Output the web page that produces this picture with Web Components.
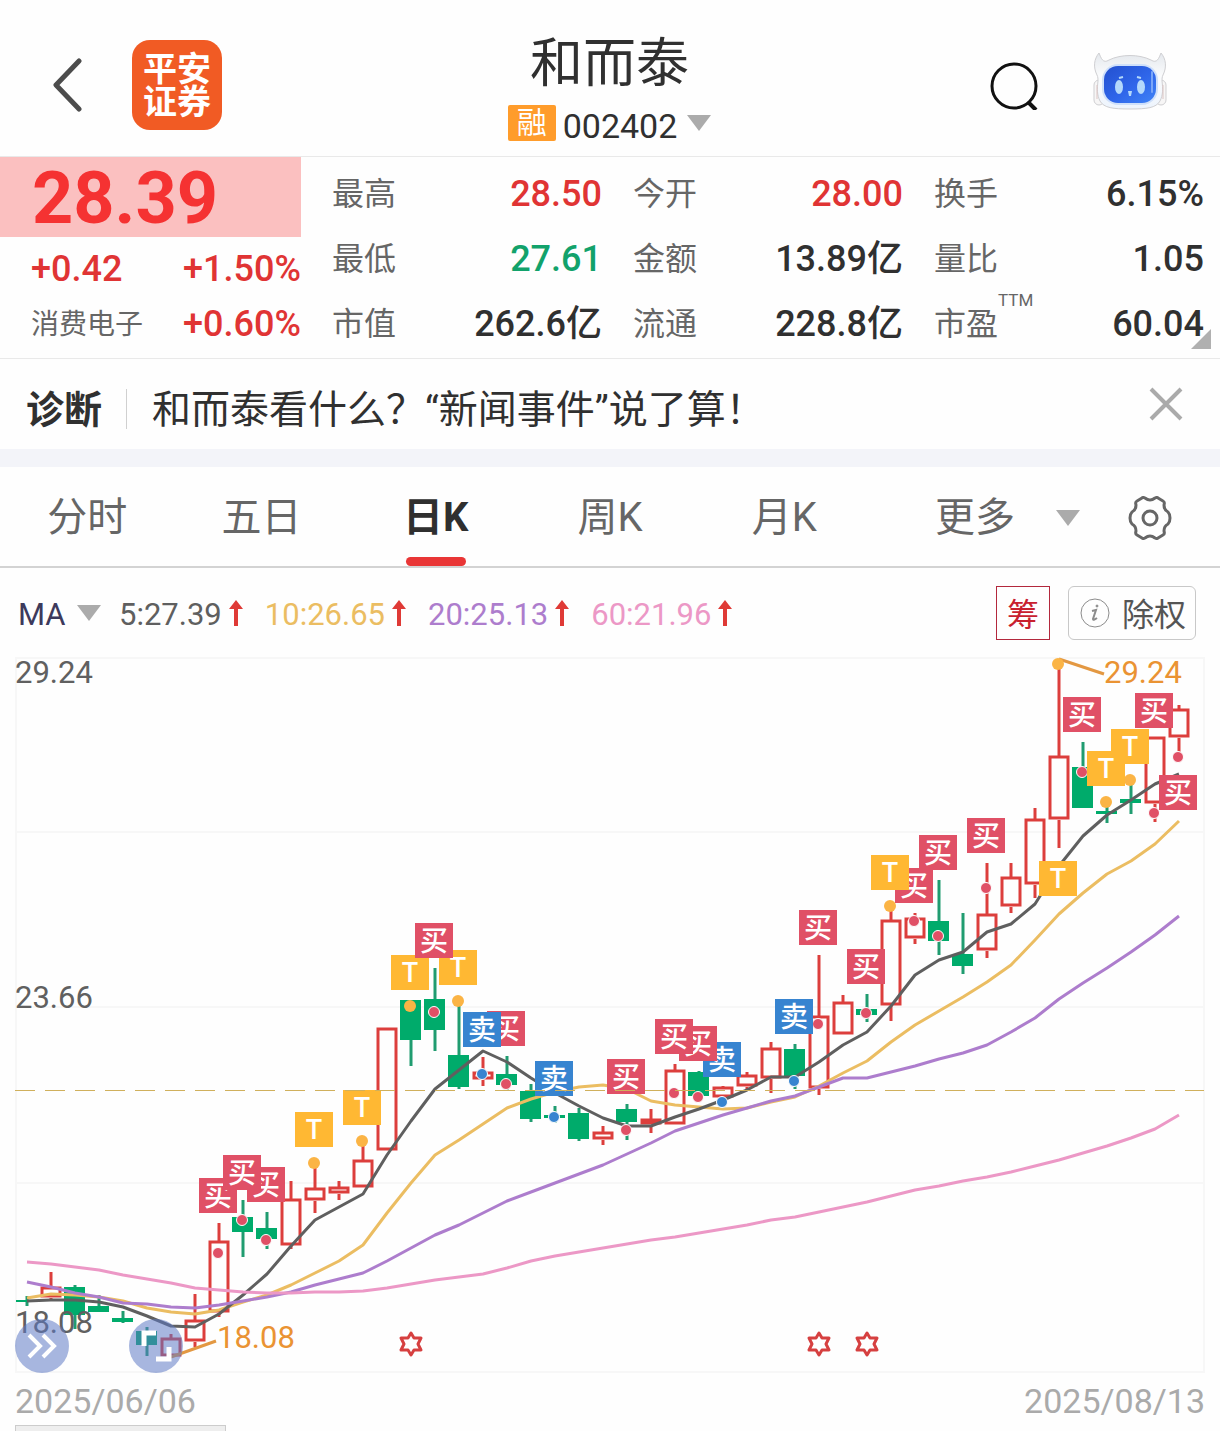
<!DOCTYPE html>
<html lang="zh-CN">
<head>
<meta charset="utf-8">
<meta name="viewport" content="width=device-width, initial-scale=1">
<title>和而泰 002402</title>
<style>
    :root {
        --c-up: #e03434;
        --c-down: #12a26b;
        --c-ink: #303030;
        --c-mute: #666;
        --c-tri: #ababab;
        --c-line: #e9e9e9;
        --font: Roboto, "Noto Sans CJK SC", sans-serif;
    }
    body {
        margin: 0;
        background: #fefefe;
        color: var(--c-ink);
        font-family: var(--font);
    }
</style>
</head>
<body>
<stock-header name="和而泰" code="002402"></stock-header>
<quote-panel price="28.39" change="+0.42" percent="+1.50%" sector="消费电子" sector-percent="+0.60%">
    <stat-cell label="最高" tone="up">28.50</stat-cell>
    <stat-cell label="今开" tone="up">28.00</stat-cell>
    <stat-cell label="换手">6.15%</stat-cell>
    <stat-cell label="最低" tone="down">27.61</stat-cell>
    <stat-cell label="金额">13.89亿</stat-cell>
    <stat-cell label="量比">1.05</stat-cell>
    <stat-cell label="市值">262.6亿</stat-cell>
    <stat-cell label="流通">228.8亿</stat-cell>
    <stat-cell label="市盈" note="TTM">60.04</stat-cell>
</quote-panel>
<diagnosis-bar>和而泰看什么？“新闻事件”说了算！</diagnosis-bar>
<period-tabs></period-tabs>
<ma-legend>
    <ma-value color="#5f5f5f">5:27.39</ma-value>
    <ma-value color="#ebbd62">10:26.65</ma-value>
    <ma-value color="#ad7dcd">20:25.13</ma-value>
    <ma-value color="#ec98c6">60:21.96</ma-value>
</ma-legend>
<k-chart></k-chart>
<date-axis from="2025/06/06" to="2025/08/13"></date-axis>

<script>
const SHARED_STYLES = `
    :host {
        display: block;
    }
    * {
        box-sizing: border-box;
    }
    svg {
        display: block;
        flex: none;
    }
    button, select {
        margin: 0;
        padding: 0;
        border: 0;
        background: none;
        color: inherit;
        font: inherit;
        cursor: pointer;
    }
`;

const triangle = () => `
    <svg width="24" height="16" viewBox="0 0 24 16" aria-hidden="true"><path d="M0 0h24L12 16z" fill="var(--c-tri)"/></svg>
`;

class BaseElement extends HTMLElement {
    constructor() {
        super();
        this.attachShadow({ mode: 'open' });
    }

    connectedCallback() {
        this.shadowRoot.innerHTML = `<style>${SHARED_STYLES}${this.styles()}</style>${this.template()}`;
    }
}

/* Top bar: back, broker logo, name and code, search, assistant */
class StockHeader extends BaseElement {
    styles() {
        return `
            header {
                display: grid;
                grid-template-columns: 1fr auto 1fr;
                padding: 32px 53px 9px 52px;
                border-bottom: 1px solid var(--c-line);
            }
            .side {
                display: flex;
                align-items: center;
                gap: 50px;
                height: 90px;
                margin-top: 8px;
            }
            .side.end {
                justify-content: flex-end;
                gap: 54px;
            }
            .logo {
                width: 90px;
                padding: 13px 0 11px;
                border-radius: 18px;
                background: #f15b24;
                color: #fff;
                font-size: 34px;
                font-weight: 700;
                line-height: 33px;
                text-align: center;
            }
            h1 {
                margin: 0 0 9px;
                font-size: 53px;
                font-weight: 400;
                line-height: 64px;
                text-align: center;
            }
            .code {
                display: flex;
                align-items: flex-start;
                gap: 7px;
                font-size: 34px;
                line-height: 42px;
            }
            .badge {
                width: 48px;
                border-radius: 2px;
                background: #ff9c2b;
                color: #fff;
                font-size: 30px;
                line-height: 36px;
                text-align: center;
            }
            .code svg {
                margin: 10px 0 0 3px;
            }
        `;
    }

    template() {
        return `
            <header>
                <div class="side">
                    <button aria-label="返回">
                        <svg width="30" height="54" viewBox="0 0 30 54" fill="none" stroke="#4c4c4c" stroke-width="5" stroke-linecap="round" stroke-linejoin="round"><path d="M27 3 4 27l23 24"/></svg>
                    </button>
                    <div class="logo">平安<br>证券</div>
                </div>
                <div>
                    <h1>${this.getAttribute('name')}</h1>
                    <button class="code"><span class="badge">融</span><span>${this.getAttribute('code')}</span>${triangle()}</button>
                </div>
                <div class="side end">
                    <button aria-label="搜索">
                        <svg width="49" height="50" viewBox="0 0 49 50" fill="none" stroke="#111" stroke-width="3"><circle cx="24" cy="26" r="22"/><path d="m38 42 8 8" stroke-width="4"/></svg>
                    </button>
                    <button aria-label="智能助手">
                        <svg width="74" height="68" viewBox="0 0 74 68">
                            <defs>
                                <linearGradient id="face" x1="0" y1="0" x2="1" y2="1">
                                    <stop offset="0" stop-color="#2350cf"/>
                                    <stop offset=".55" stop-color="#2f66ea"/>
                                    <stop offset="1" stop-color="#3f83f6"/>
                                </linearGradient>
                                <linearGradient id="shell" x1="0" y1="0" x2="0" y2="1">
                                    <stop offset="0" stop-color="#e4e8ed"/>
                                    <stop offset=".4" stop-color="#fafbfc"/>
                                    <stop offset="1" stop-color="#edf4fd"/>
                                </linearGradient>
                            </defs>
                            <g stroke="#cfcfd2" stroke-width="1">
                                <rect x="1" y="29" width="10" height="25" rx="5" fill="#f7f6f6"/>
                                <rect x="63" y="29" width="10" height="25" rx="5" fill="#f7f6f6"/>
                                <path d="M6 2C1 8 0 16 4 24c1 2 1 4 1 6-1 8-1 14 2 20 4 7 13 8 30 8s26-1 30-8c3-6 3-12 2-20 0-2 0-4 1-6 4-8 3-16-2-22-2 5-4 11-10 7C46 3 28 3 16 9 10 13 8 7 6 2z" fill="url(#shell)"/>
                            </g>
                            <path d="M4 34v14M70 34v14" stroke="#dcc5c4" stroke-width="1"/>
                            <rect x="9" y="13" width="56" height="41" rx="16" fill="#cfe0fa"/>
                            <rect x="11" y="15" width="52" height="37" rx="14" fill="url(#face)"/>
                            <path d="M59 21v20" stroke="#7aa6f8" stroke-width="2" stroke-linecap="round"/>
                            <g fill="#b4d9fb">
                                <ellipse cx="26" cy="36" rx="4" ry="7"/>
                                <ellipse cx="48" cy="36" rx="4" ry="7"/>
                                <path d="M35 40h4l-1 5h-2z"/>
                            </g>
                            <path d="m26 27 4-1M48 27l-4-1" stroke="#b4d9fb" stroke-width="2"/>
                        </svg>
                    </button>
                </div>
            </header>
        `;
    }
}

class QuotePanel extends BaseElement {
    styles() {
        return `
            section {
                position: relative;
                display: grid;
                grid-template-columns: 1fr 3fr;
                padding-right: 16px;
                border-bottom: 1px solid var(--c-line);
                color: var(--c-up);
                font-size: 36px;
                font-weight: 500;
            }
            .price {
                padding: 4px 0 0 32px;
                background: #fbc0c0;
                color: #f53232;
                font-size: 72px;
                font-weight: 700;
                line-height: 76px;
            }
            .changes {
                display: grid;
                grid-template-columns: auto auto;
                justify-content: space-between;
                padding: 5px 0 0 31px;
                line-height: 55px;
            }
            .changes span:nth-child(even) {
                text-align: right;
            }
            .sector {
                color: var(--c-mute);
                font-size: 28px;
                font-weight: 400;
            }
            .stats {
                display: grid;
                grid-template-columns: repeat(3, 1fr);
                padding: 5px 0 1px;
            }
            .more {
                position: absolute;
                right: 9px;
                bottom: 9px;
            }
        `;
    }

    template() {
        return `
            <section>
                <div>
                    <div class="price">${this.getAttribute('price')}</div>
                    <div class="changes">
                        <span>${this.getAttribute('change')}</span>
                        <span>${this.getAttribute('percent')}</span>
                        <span class="sector">${this.getAttribute('sector')}</span>
                        <span>${this.getAttribute('sector-percent')}</span>
                    </div>
                </div>
                <div class="stats"><slot></slot></div>
                <button class="more" aria-label="展开">
                    <svg width="20" height="20" viewBox="0 0 20 20"><path d="M20 0v20H0z" fill="#b0b0b0"/></svg>
                </button>
            </section>
        `;
    }
}

class StatCell extends BaseElement {
    styles() {
        return `
            :host {
                display: flex;
                padding-left: 31px;
                color: var(--c-ink);
                line-height: 65px;
            }
            :host([tone="up"]) {
                color: var(--c-up);
            }
            :host([tone="down"]) {
                color: var(--c-down);
            }
            .label {
                color: var(--c-mute);
                font-size: 32px;
                font-weight: 400;
            }
            .note {
                color: var(--c-mute);
                font-size: 17px;
                font-weight: 400;
                line-height: 16px;
            }
            .value {
                margin-left: auto;
            }
        `;
    }

    template() {
        const note = this.getAttribute('note');
        return `
            <span class="label">${this.getAttribute('label')}</span>
            ${note ? `<span class="note">${note}</span>` : ''}
            <span class="value"><slot></slot></span>
        `;
    }
}

class DiagnosisBar extends BaseElement {
    styles() {
        return `
            div {
                display: flex;
                align-items: center;
                padding: 10px 37px;
                border-bottom: 18px solid #f3f4f9;
                font-size: 39px;
                line-height: 58px;
            }
            strong {
                margin-right: 24px;
                padding-top: 12px;
                font-size: 38px;
            }
            p {
                flex: 1;
                margin: 0;
                padding-top: 12px;
            }
            i {
                width: 1px;
                height: 40px;
                margin: 10px 25px 0 0;
                background: #d0d0d0;
            }
            div {
                padding-left: 26px;
            }
        `;
    }

    template() {
        return `
            <div>
                <strong>诊断</strong><i></i>
                <p><slot></slot></p>
                <button aria-label="关闭">
                    <svg width="34" height="34" viewBox="0 0 34 34" stroke="#aaa" stroke-width="4"><path d="m2 2 30 30M32 2 2 32"/></svg>
                </button>
            </div>
        `;
    }
}

class PeriodTabs extends BaseElement {
    styles() {
        return `
            nav {
                display: grid;
                grid-template-columns: repeat(5, 1fr) 2fr;
                padding-top: 12px;
                border-bottom: 2px solid #d3d3d3;
                color: var(--c-mute);
                font-size: 40px;
                line-height: 78px;
            }
            nav > button {
                display: flex;
                flex-direction: column;
                align-items: center;
                padding-bottom: 9px;
            }
            .active {
                padding-bottom: 0;
                color: #2f2f2f;
                font-weight: 700;
            }
            .active::after {
                content: "";
                width: 60px;
                height: 9px;
                border-radius: 5px;
                background: #e93636;
            }
            .end {
                display: flex;
                justify-content: flex-end;
                gap: 48px;
                padding: 0 48px 9px 0;
            }
            .end button {
                display: flex;
                align-items: center;
                gap: 41px;
            }
        `;
    }

    template() {
        const tabs = ['分时', '五日', '日K', '周K', '月K'];
        return `
            <nav>
                ${tabs.map((tab) => `<button${tab === '日K' ? ' class="active" aria-current="true"' : ''}>${tab}</button>`).join('')}
                <div class="end">
                    <button>更多 ${triangle()}</button>
                    <button aria-label="设置">
                        <svg width="44" height="44" viewBox="0 0 44 44" fill="none" stroke="#666" stroke-width="3" stroke-linejoin="round">
                            <path d="M14 2Q15 1 17 2Q22 6 27 2Q29 1 30 2L35 5Q37 6 36 9Q36 14 40 16Q42 18 42 22Q42 26 40 28Q36 30 36 35Q37 38 35 39L30 42Q29 43 27 42Q22 38 17 42Q15 43 14 42L9 39Q7 38 8 35Q8 30 4 28Q2 26 2 22Q2 18 4 16Q8 14 8 9Q7 6 9 5Z"/>
                            <circle cx="22" cy="22" r="7"/>
                        </svg>
                    </button>
                </div>
            </nav>
        `;
    }
}

class MaLegend extends BaseElement {
    styles() {
        return `
            div {
                display: flex;
                align-items: center;
                gap: 22px;
                padding: 18px 24px 18px 18px;
                font-size: 31px;
                line-height: 50px;
            }
            label {
                display: flex;
                align-items: center;
                gap: 11px;
                margin-right: -4px;
                color: #3d3a5c;
            }
            select {
                appearance: none;
                padding-top: 4px;
                line-height: 50px;
            }
            .chips, .rights {
                height: 54px;
                padding-top: 4px;
                font-size: 32px;
                line-height: 48px;
            }
            .chips {
                width: 54px;
                margin-left: auto;
                margin-right: -4px;
                border: 1px solid #b3283d;
                color: #c8202f;
            }
            .rights {
                display: flex;
                align-items: center;
                gap: 12px;
                padding: 0 9px 0 11px;
                border: 1px solid #c8c8c8;
                border-radius: 6px;
                color: #555;
            }
            .rights span {
                padding-top: 4px;
            }
        `;
    }

    template() {
        return `
            <div>
                <label><select aria-label="指标"><option>MA</option></select>${triangle()}</label>
                <slot></slot>
                <button class="chips">筹</button>
                <button class="rights">
                    <svg width="30" height="30" viewBox="0 0 30 30" fill="none" stroke="#8c8c8c">
                        <circle cx="15" cy="15" r="14"/>
                        <path d="m12 13 4-1-3 9q0 2 4-1" stroke-width="2"/>
                        <circle cx="17" cy="8" r="1" fill="#8c8c8c"/>
                    </svg>
                    <span>除权</span>
                </button>
            </div>
        `;
    }
}

class MaValue extends BaseElement {
    styles() {
        return `
            :host {
                display: flex;
                align-items: center;
                gap: 7px;
                color: ${this.getAttribute('color')};
            }
            span {
                padding-top: 4px;
            }
        `;
    }

    template() {
        return `
            <span><slot></slot></span>
            <svg width="14" height="26" viewBox="0 0 14 26" aria-hidden="true"><path d="M7 0 14 9H9v17H5V9H0z" fill="#df3a36"/></svg>
        `;
    }
}

/* Candles run left to right, one per trading day: [up, high, top, bottom, low] */
const CANDLES = [
    [0, 1296, 1300, 1302, 1306], [1, 1272, 1287, 1298, 1300], [0, 1285, 1287, 1315, 1329],
    [0, 1295, 1306, 1312, 1312], [0, 1311, 1318, 1322, 1323], [0, 1327, 1331, 1345, 1356],
    [1, 1334, 1338, 1357, 1358], [1, 1294, 1320, 1342, 1347], [1, 1223, 1241, 1313, 1317],
    [0, 1200, 1217, 1232, 1257], [0, 1212, 1228, 1239, 1249], [1, 1181, 1199, 1246, 1249],
    [1, 1163, 1188, 1201, 1213], [1, 1181, 1187, 1194, 1200], [1, 1141, 1160, 1188, 1188],
    [1, 1028, 1028, 1151, 1151], [0, 1000, 1000, 1040, 1066], [0, 968, 999, 1030, 1051],
    [0, 1001, 1055, 1087, 1089], [1, 1057, 1072, 1080, 1086], [0, 1056, 1074, 1085, 1091],
    [0, 1084, 1091, 1119, 1122], [0, 1106, 1115, 1118, 1123], [0, 1108, 1113, 1139, 1141],
    [1, 1126, 1132, 1140, 1145], [0, 1104, 1109, 1122, 1140], [1, 1109, 1119, 1125, 1133],
    [1, 1064, 1070, 1125, 1125], [0, 1071, 1072, 1096, 1100], [1, 1086, 1087, 1098, 1104],
    [1, 1072, 1075, 1087, 1091], [1, 1042, 1048, 1079, 1093], [0, 1044, 1049, 1076, 1089],
    [1, 955, 1016, 1089, 1095], [1, 995, 1002, 1035, 1035], [0, 994, 1009, 1015, 1022],
    [1, 905, 920, 1006, 1021], [1, 913, 918, 939, 944], [0, 880, 921, 941, 955],
    [0, 913, 954, 966, 974], [1, 863, 914, 951, 958], [1, 863, 877, 907, 913],
    [1, 808, 819, 885, 898], [1, 665, 756, 820, 848], [0, 742, 767, 808, 808],
    [0, 800, 811, 814, 823], [0, 780, 799, 803, 814], [1, 737, 737, 804, 822],
    [1, 705, 709, 738, 752],
];

const AVERAGES = [
    { color: '#ebbd62', ys: [1298, 1294, 1295, 1297, 1301, 1308, 1312, 1314, 1310, 1302, 1295, 1285, 1273, 1261, 1245, 1213, 1183, 1155, 1140, 1124, 1108, 1099, 1092, 1087, 1085, 1089, 1101, 1105, 1107, 1109, 1108, 1102, 1097, 1086, 1073, 1061, 1042, 1025, 1011, 997, 982, 965, 940, 914, 893, 874, 861, 844, 821] },
    { color: '#5f5f5f', ys: [1301, 1300, 1300, 1302, 1307, 1316, 1326, 1327, 1314, 1295, 1274, 1246, 1220, 1207, 1194, 1155, 1121, 1089, 1070, 1051, 1062, 1078, 1093, 1106, 1118, 1126, 1126, 1117, 1109, 1100, 1090, 1077, 1077, 1062, 1045, 1032, 1006, 975, 960, 952, 932, 924, 904, 866, 836, 815, 800, 784, 774] },
    { color: '#ad7dcd', ys: [1282, 1287, 1293, 1297, 1303, 1304, 1307, 1308, 1305, 1301, 1297, 1292, 1285, 1279, 1273, 1261, 1248, 1235, 1225, 1213, 1201, 1192, 1183, 1174, 1165, 1154, 1143, 1131, 1123, 1115, 1108, 1101, 1096, 1087, 1078, 1078, 1072, 1066, 1059, 1053, 1045, 1032, 1018, 999, 983, 968, 952, 935, 916] },
    { color: '#ec98c6', ys: [1262, 1264, 1267, 1270, 1275, 1279, 1283, 1288, 1290, 1292, 1293, 1293, 1292, 1292, 1291, 1288, 1284, 1280, 1277, 1274, 1268, 1261, 1256, 1252, 1248, 1244, 1240, 1237, 1233, 1229, 1225, 1220, 1217, 1212, 1207, 1202, 1196, 1190, 1186, 1181, 1177, 1172, 1166, 1160, 1153, 1146, 1138, 1129, 1115] },
];

/* Paint order: later flags cover earlier ones. [candle, flag top, dot, kind] */
const TRADES = [
    [10, 1167, 1240, '买'], [8, 1178, 1253, '买'], [9, 1155, 1220, '买'],
    [12, 1112, 1163, 'T'], [14, 1090, 1141, 'T'], [16, 955, 1006, 'T'],
    [18, 950, 1001, 'T'], [17, 923, 1012, '买'], [20, 1011, 1084, '买'],
    [19, 1012, 1074, '卖'], [22, 1061, 1117, '卖'], [25, 1059, 1130, '买'],
    [29, 1042, 1102, '卖'], [28, 1026, 1097, '买'], [27, 1019, 1093, '买'],
    [32, 999, 1081, '卖'], [33, 910, 1024, '买'], [35, 949, 1013, '买'],
    [37, 868, 921, '买'], [38, 835, 936, '买'], [36, 855, 906, 'T'],
    [40, 818, 888, '买'], [43, 861, 664, 'T'], [44, 697, 772, '买'],
    [46, 729, 780, 'T'], [45, 751, 802, 'T'], [47, 693, 813, '买'],
    [48, 775, 757, '买'],
];

const FLAG_COLORS = { '买': '#e05066', '卖': '#3784d0', 'T': '#ffb833' };
const candleX = (i) => 27 + 24 * i;

const candle = ([up, high, top, bottom, low], i) => {
    const x = candleX(i);
    if (!up) {
        return `<path d="M${x} ${high}V${low}" stroke="#209c70" stroke-width="3"/><rect x="${x - 11}" y="${top}" width="21" height="${bottom - top}" fill="#00ab6b"/>`;
    }
    return `<g fill="none" stroke="#dc3e3c" stroke-width="3"><path d="M${x} ${high}V${top}M${x} ${bottom}V${low}"/><rect x="${x - 9}" y="${top + 1}" width="18" height="${Math.max(bottom - top - 3, 2)}"/></g>`;
};

const average = ({ color, ys }) => (
    `<polyline points="${ys.map((y, i) => `${candleX(i)},${y}`).join(' ')}" fill="none" stroke="${color}" stroke-width="3" stroke-linejoin="round"/>`
);

const dot = ([i, , y, kind]) => (kind === 'T'
    ? `<circle cx="${candleX(i) - 1}" cy="${y}" r="6" fill="#fbb445"/>`
    : `<circle cx="${candleX(i) - 1}" cy="${y}" r="5.5" fill="${FLAG_COLORS[kind]}" stroke="#fff" stroke-width="1"/>`);

const flag = ([i, y, , kind]) => `
    <rect x="${candleX(i) - 20}" y="${y}" width="38" height="35" fill="${FLAG_COLORS[kind]}"/>
    <text class="flag${kind === 'T' ? ' t' : ''}" x="${candleX(i) - 1}" y="${y + (kind === 'T' ? 27 : 28)}">${kind}</text>
`;

const star = (x) => (
    `<path transform="translate(${x} 1344)" d="M0-11 3-6H10L7 0l3 6H3L0 11-3 6h-7l3-6-3-6h7z" fill="none" stroke="#d64040" stroke-width="3" stroke-linejoin="round"/>`
);

class KChart extends BaseElement {
    styles() {
        return `
            :host {
                position: relative;
            }
            svg {
                width: 100%;
                height: auto;
                overflow: visible;
            }
            text {
                font-size: 31px;
                fill: #606060;
            }
            .flag {
                font-size: 28px;
                font-weight: 500;
                fill: #fff;
                text-anchor: middle;
            }
            .flag.t {
                font-size: 27px;
            }
            .extreme {
                fill: #ea9333;
            }
            button {
                position: absolute;
                bottom: 0;
                width: 54px;
                height: 54px;
                border-radius: 50%;
                background: rgba(93, 121, 196, .54);
            }
            .next {
                left: 15px;
            }
            .expand {
                left: 129px;
            }
        `;
    }

    template() {
        return `
            <svg viewBox="0 658 1220 715" role="img" aria-label="日K线">
                <path d="M15 658H1205M15 832H1205M15 1007H1205M15 1183H1205M15 1372H1205M16 658V1372M1204 658V1372" stroke="#f7f7f7" stroke-width="2"/>
                ${CANDLES.map(candle).join('')}
                ${AVERAGES.map(average).join('')}
                <g fill="none" stroke="#e39842" stroke-width="3"><path d="M1059 659l45 15M171 1357l45-16"/></g>
                ${TRADES.map(dot).join('')}
                ${TRADES.map(flag).join('')}
                <path d="M15 1090.5H1204" stroke="#d0b05c" stroke-width="1" stroke-dasharray="20 10"/>
                ${[411, 819, 867].map(star).join('')}
                <text x="15" y="683">29.24</text>
                <text x="15" y="1008">23.66</text>
                <text x="15" y="1333">18.08</text>
                <text class="extreme" x="1104" y="683">29.24</text>
                <text class="extreme" x="217" y="1348">18.08</text>
            </svg>
            <button class="next" aria-label="下一段">
                <svg viewBox="0 0 54 54" fill="none" stroke="#fff" stroke-width="4"><path d="m14 16 11 11-11 11M28 16l11 11-11 11"/></svg>
            </button>
            <button class="expand" aria-label="全屏">
                <svg viewBox="0 0 54 54" fill="none" stroke="#fff" stroke-width="5"><path d="M15 27V14h12M40 28v12H27"/></svg>
            </button>
        `;
    }
}

class DateAxis extends BaseElement {
    styles() {
        return `
            .dates {
                display: flex;
                justify-content: space-between;
                padding: 4px 15px 0;
                color: #aaa;
                font-size: 34px;
                line-height: 48px;
            }
            .thumb {
                width: 211px;
                height: 6px;
                margin-left: 15px;
                border: 1px solid #ccc;
                border-bottom: 0;
                background: #eee;
            }
        `;
    }

    template() {
        return `
            <div class="dates"><span>${this.getAttribute('from')}</span><span>${this.getAttribute('to')}</span></div>
            <div class="thumb"></div>
        `;
    }
}

customElements.define('stock-header', StockHeader);
customElements.define('quote-panel', QuotePanel);
customElements.define('stat-cell', StatCell);
customElements.define('diagnosis-bar', DiagnosisBar);
customElements.define('period-tabs', PeriodTabs);
customElements.define('ma-legend', MaLegend);
customElements.define('ma-value', MaValue);
customElements.define('k-chart', KChart);
customElements.define('date-axis', DateAxis);
</script>
</body>
</html>
